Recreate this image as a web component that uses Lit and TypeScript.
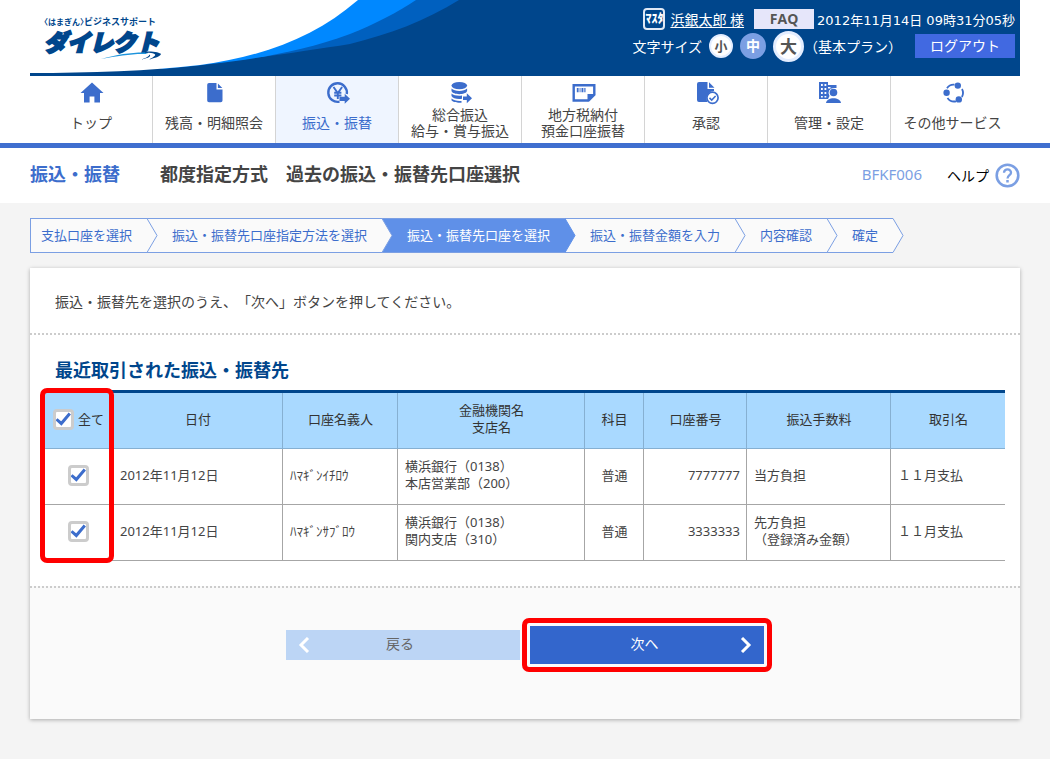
import { LitElement, html, css, svg } from "lit";
import { customElement, state } from "lit/decorators.js";
import { classMap } from "lit/directives/class-map.js";

const icons = {
  home: svg`<path d="M12 1.5 0.5 12H4v9.500h5.600v-6h4.800v6H20V12h3.500z"/>`,
  file: svg`<path d="M6 2h7.500v6.500h6V19.500a1.800 1.800 0 0 1-1.800 1.800H6A1.800 1.800 0 0 1 4.200 19.500V3.800A1.800 1.800 0 0 1 6 2zM14.900 2.400 19.300 7h-4.400z"/>`,
  yen: svg`<path d="M13.500 20.700A9.300 9.300 0 1 1 20.800 13" fill="none" stroke="currentColor" stroke-width="2.400"/><path d="M7.500 6l4.300 6 4.300-6M11.800 12v6M8.200 11.800h7.200M8.200 14.500h7.200" fill="none" stroke="currentColor" stroke-width="1.900"/><path d="M13.500 15.700h5.200v-2.900l5.300 5-5.300 5v-2.900h-5.200z"/>`,
  stack: svg`<ellipse cx="10.300" cy="4.600" rx="7.800" ry="3.700"/><path d="M2.500 7.600c3 3.200 12.600 3.200 15.600 0V10c-1.500 4.200-14.100 4.200-15.600 0zM2.500 12.500c2 2 7 2.600 10.500 2v3.300C8.500 18.500 3.500 17.500 2.500 15zM2.500 17.600c2 2 6 2.600 10 2.300v1.900c-5 .2-9-.8-10-2.500zM14 15.500h3.800v-3.200l5.200 5-5.200 5v-3.200H14z"/>`,
  slip: svg`<path d="M1.700 4.200h20.600v9.500l-5.800 5.800H1.700z" fill="none" stroke="currentColor" stroke-width="2.400"/><path d="M15.500 20.500V13H23.400z"/><path d="M4.800 7h1.800v4.200H4.800zM7.600 7h.9v4.200h-.9zM9.500 7h1.900v4.200H9.500zM12.300 7h1.200v4.200h-1.200z"/>`,
  approve: svg`<path d="M4 1h8.500v7H19v2a7.500 7.500 0 0 0-6.500 11H4a2 2 0 0 1-2-2V3a2 2 0 0 1 2-2zM14 1.300 19.500 6.800H14z"/><circle cx="17.500" cy="16.800" r="5.600" fill="none" stroke="currentColor" stroke-width="1.700"/><path d="m14.500 16.900 2.200 2.200 3.900-4.200" fill="none" stroke="currentColor" stroke-width="1.500"/>`,
  admin: svg`<path d="M1 1h9v3h8.500v3H16a5 5 0 0 0-4.500 8L10 18H1zm2 2v2h1.800V3zm3.500 0v2h1.800V3zM3 7v2h1.800V7zm3.500 0v2h1.800V7zM3 11v2h1.800v-2zm3.500 0v2h1.800v-2zM3 15v1.500h1.800V15zm3.500 0v1.500h1.800V15zM10 6v1.500h2.500V6z" fill-rule="evenodd"/><circle cx="15.500" cy="11.500" r="3.800"/><path d="M8 22c.5-6.500 14.500-6.500 15 0z"/>`,
  other: svg`<path d="M5 7.200A8 8 0 0 1 12.500 3.700M20 8a8.300 8.300 0 0 1-.1 8M14 20.300a8.300 8.300 0 0 1-8.500-3.400" fill="none" stroke="currentColor" stroke-width="1.800"/><circle cx="15.800" cy="4.600" r="3.200"/><circle cx="4.600" cy="11.700" r="3.200"/><circle cx="16.800" cy="18.400" r="3.200"/>`,
};

const navItems = [
  { icon: icons.home, lines: ["トップ"] },
  { icon: icons.file, lines: ["残高・明細照会"] },
  { icon: icons.yen, lines: ["振込・振替"], active: true },
  { icon: icons.stack, lines: ["総合振込", "給与・賞与振込"] },
  { icon: icons.slip, lines: ["地方税納付", "預金口座振替"] },
  { icon: icons.approve, lines: ["承認"] },
  { icon: icons.admin, lines: ["管理・設定"] },
  { icon: icons.other, lines: ["その他サービス"] },
];

const steps = [
  "支払口座を選択",
  "振込・振替先口座指定方法を選択",
  "振込・振替先口座を選択",
  "振込・振替金額を入力",
  "内容確認",
  "確定",
];
const currentStep = 2;

const payees = [
  { date: "2012年11月12日", name: "ﾊﾏｷﾞﾝｲﾁﾛｳ", bank: "横浜銀行（0138）", branch: "本店営業部（200）", type: "普通", no: "7777777", fee: ["当方負担"], label: "１１月支払" },
  { date: "2012年11月12日", name: "ﾊﾏｷﾞﾝｻﾌﾞﾛｳ", bank: "横浜銀行（0138）", branch: "関内支店（310）", type: "普通", no: "3333333", fee: ["先方負担", "（登録済み金額）"], label: "１１月支払" },
];

const base = css`
  *, *::before, *::after { box-sizing: border-box; }
  h1, h2, p, ol, button, input { margin: 0; padding: 0; }
  a { color: inherit; text-decoration: none; }
  button { border: 0; font: inherit; cursor: pointer; }
`;

@customElement("site-header")
class SiteHeader extends LitElement {
  static styles = [base, css`
    :host { display: block; margin: 0 30px; }
    .top { position: relative; display: flex; justify-content: space-between; height: 76px; background: #00468c; color: #fff; overflow: hidden; }
    .wave { position: absolute; left: 0; top: 0; width: 480px; height: 76px; }
    .logo { position: relative; padding: 16px 0 0 14px; color: #00468c; }
    .tagline { display: flex; align-items: center; height: 12px; line-height: 12px; font-weight: 700; font-size: 9px; }
    .brand { font-size: 8px; font-feature-settings: "halt"; }
    .name { display: block; font-size: 23px; line-height: 28px; font-weight: 900; font-style: italic; -webkit-text-stroke: 2px #00468c; }
    .road { position: absolute; left: 70px; top: 48px; width: 62px; height: 14px; }
    .tools { position: relative; padding: 8px 5px 0 0; display: flex; flex-direction: column; align-items: flex-end; }
    .line { display: flex; align-items: center; font-size: 14px; white-space: nowrap; }
    .line.user { height: 22px; }
    .line.size { height: 32px; }
    .master { display: grid; place-items: center; width: 22px; height: 22px; margin-right: 5px; border: 2px solid #dfe8f5; border-radius: 4px; font-size: 12px; line-height: 16px; font-weight: 900; }
    .account { text-decoration: underline; text-underline-offset: 2px; }
    .faq { width: 60px; height: 20px; margin: 0 3px 0 10px; background: #e6e6fa; color: #555; font: 700 14px/20px "Open Sans", sans-serif; text-align: center; }
    .clock { font-family: "DejaVu Sans", "Noto Sans CJK JP", sans-serif; font-size: 13px; }
    .round { display: grid; place-items: center; border-radius: 50%; background: #fff; color: #555; border: 2px solid #e3edff; font-weight: 700; line-height: 1; }
    .s { width: 24px; height: 24px; margin-left: 7px; font-size: 13px; }
    .m { width: 26px; height: 26px; margin-left: 7px; font-size: 14px; background: #7b9fe3; border-color: #7b9fe3; color: #fff; }
    .l { width: 31px; height: 31px; margin-left: 7px; font-size: 17px; border-width: 3px; }
    .logout { width: 100px; height: 24px; margin-left: 13px; background: #4169e1; color: #fff; font-size: 14px; line-height: 24px; }
  `];
  render() {
    return html`
      <header class="top">
        <svg class="wave" viewBox="0 0 480 76" aria-hidden="true">
          <path fill="#0060bf" d="M130 69C200 62 270 52 320 44 360 34 395 21 429 0H300V40z"/>
          <path fill="#0088ff" d="M130 69C205 62 260 56 320 34 345 24 368 12 386 0H300z"/>
          <path fill="#fff" d="M0 73C60 73 120 71 170 65 235 56 285 37 328 0H0z"/>
        </svg>
        <div class="logo">
          <div class="tagline"><span class="brand">〈はまぎん〉</span><span>ビジネスサポート</span></div>
          <span class="name">ダイレクト</span>
          <svg class="road" viewBox="0 0 62 14" aria-hidden="true">
            <path fill="#1d94dc" d="M1 11C18 6 34 4 47 4.500L46 6C32 5.500 18 8 1 11z"/>
            <path fill="#fff" d="M36 14C50 11 52 5 46 3L62 2 58 12z"/>
            <path fill="#00468c" d="M45 3.500C54 3 60 4.500 61 6 60 8.500 55 10 49 11.500 54 9 57 7 54 5.800 52 4.800 48 4.500 45 4.800zM41 11.500C46 10 50 8 49 6.500 52 8 49 10 41 11.500z"/>
          </svg>
        </div>
        <div class="tools">
          <div class="line user">
            <span class="master">ﾏｽﾀ</span><a class="account" href="#">浜銀太郎 様</a>
            <button class="faq">FAQ</button><span class="clock">2012年11月14日 09時31分05秒</span>
          </div>
          <div class="line size">
            <span>文字サイズ</span><button class="round s">小</button><button class="round m">中</button><button class="round l">大</button>
            <span>（基本プラン）</span><button class="logout">ログアウト</button>
          </div>
        </div>
      </header>`;
  }
}

@customElement("main-nav")
class MainNav extends LitElement {
  static styles = [base, css`
    :host { display: block; border-bottom: 5px solid #3f6fcf; background: #fff; }
    .nav { display: grid; grid-template-columns: repeat(8, 1fr); margin: 0 36px 0 30px; height: 67px; }
    .item { display: flex; flex-direction: column; align-items: center; padding-top: 5px; border-right: 1px solid #d4d4d4; font-size: 14px; line-height: 16px; color: #444; }
    .item:last-child { border-right: 0; }
    .icon { width: 24px; height: 24px; margin-left: 2px; fill: currentColor; color: #3c6dcc; }
    .label { flex: 1; display: flex; flex-direction: column; justify-content: center; align-items: center; white-space: nowrap; padding-bottom: 2px; }
    .active { background: #eff5ff; color: #3c6dcc; }
  `];
  render() {
    return html`<nav class="nav">${navItems.map((n) => html`
      <a href="#" class=${classMap({ item: true, active: !!n.active })}>
        <svg class="icon" viewBox="0 0 24 24" aria-hidden="true">${n.icon}</svg>
        <span class="label">${n.lines.map((l) => html`<span>${l}</span>`)}</span>
      </a>`)}</nav>`;
  }
}

@customElement("step-flow")
class StepFlow extends LitElement {
  static styles = [base, css`
    :host { display: block; }
    .steps { display: flex; list-style: none; }
    .step { position: relative; height: 35px; padding: 0 15px 0 25px; border: solid #7b9fe3; border-width: 1px 0; background: #fafafa; color: #3c6dcc; font-size: 13px; line-height: 33px; white-space: nowrap; }
    .step:first-child { padding-left: 10px; border-left-width: 1px; }
    .tip { position: absolute; z-index: 1; left: 100%; top: -1px; width: 11px; height: 35px; fill: #fafafa; stroke: #7b9fe3; }
    .current { background: #5f90e8; color: #fff; }
    .current .tip { fill: #5f90e8; stroke: #5f90e8; }
  `];
  render() {
    return html`<ol class="steps">${steps.map((s, i) => html`
      <li class=${classMap({ step: true, current: i === currentStep })}>${s}
        <svg class="tip" viewBox="0 0 11 35" aria-hidden="true"><path d="M0 .5 10 17.500 0 34.500"/></svg>
      </li>`)}</ol>`;
  }
}

@customElement("payee-table")
class PayeeTable extends LitElement {
  @state() private picked = payees.map(() => true);

  static styles = [base, css`
    :host { display: block; position: relative; }
    .table { width: 100%; table-layout: fixed; border-collapse: separate; border-spacing: 0; border-top: 3px solid #00468c; font-size: 13px; line-height: 17px; color: #444; }
    .w1 { width: 68px; } .w2 { width: 170px; } .w3 { width: 115px; } .w4 { width: 187px; }
    .w5 { width: 59px; } .w6 { width: 103px; } .w7 { width: 144px; }
    .head, .cell { height: 56px; padding: 0 6px 3px 7px; border: solid #a6a6a6; border-width: 0 1px 1px 0; text-align: left; font-weight: 400; vertical-align: middle; }
    .head { background: #a9d9ff; border-color: #86b0d2; color: #333; text-align: center; }
    .head:last-child, .cell:last-child { border-right: 0; }
    .head.pick, .cell.pick { padding: 0 0 2px; text-align: center; }
    .center { text-align: center; }
    .cell.number { text-align: right; }
    .all { display: flex; align-items: center; gap: 4px; padding-left: 8px; white-space: nowrap; }
    .box { appearance: none; flex: none; display: inline-block; vertical-align: middle; width: 21px; height: 21px; border: 3px solid #ccc; border-radius: 4px; background: #fff; }
    .box:checked { background: #fff url("data:image/svg+xml,%3Csvg xmlns='http://www.w3.org/2000/svg' viewBox='0 0 17 17'%3E%3Cpath d='M1.500 8.300 6.300 12.500 14.800 2.500' fill='none' stroke='%233c6dcc' stroke-width='3'/%3E%3C/svg%3E") center / 17px 17px no-repeat border-box; }
    .ring { position: absolute; left: -5px; top: -2px; bottom: -2px; width: 74px; border: 5px solid #f00; border-radius: 7px; pointer-events: none; }
  `];

  private toggleAll(e: Event) {
    const on = (e.target as HTMLInputElement).checked;
    this.picked = this.picked.map(() => on);
  }
  private toggle(i: number) {
    this.picked = this.picked.map((p, k) => (k === i ? !p : p));
  }

  render() {
    return html`
      <table class="table">
        <colgroup><col class="w1"><col class="w2"><col class="w3"><col class="w4"><col class="w5"><col class="w6"><col class="w7"><col></colgroup>
        <thead><tr>
          <th class="head pick"><label class="all"><input class="box" type="checkbox" .checked=${this.picked.every(Boolean)} @change=${this.toggleAll}>全て</label></th>
          <th class="head">日付</th><th class="head">口座名義人</th><th class="head">金融機関名<br>支店名</th>
          <th class="head">科目</th><th class="head">口座番号</th><th class="head">振込手数料</th><th class="head">取引名</th>
        </tr></thead>
        <tbody>${payees.map((p, i) => html`<tr>
          <td class="cell pick"><input class="box" type="checkbox" aria-label=${p.name} .checked=${this.picked[i]} @change=${() => this.toggle(i)}></td>
          <td class="cell">${p.date}</td><td class="cell">${p.name}</td>
          <td class="cell">${p.bank}<br>${p.branch}</td>
          <td class="cell center">${p.type}</td><td class="cell number">${p.no}</td>
          <td class="cell">${p.fee.map((f, k) => html`${k ? html`<br>` : ""}${f}`)}</td>
          <td class="cell">${p.label}</td>
        </tr>`)}</tbody>
      </table>
      <div class="ring"></div>`;
  }
}

@customElement("app-root")
class AppRoot extends LitElement {
  static styles = [base, css`
    :host { display: block; min-height: 100vh; background: #f4f4f4; font-family: "Noto Sans", "Noto Sans CJK JP", sans-serif; text-spacing-trim: space-all; color: #444; }
    .banner { display: flow-root; background: #fff; }
    .title { display: flex; align-items: center; height: 55px; padding: 0 30px; background: #fff; font-size: 18px; line-height: 24px; }
    .category { width: 130px; padding-bottom: 3px; color: #3c6dcc; font-weight: 700; }
    .heading { flex: 1; padding-bottom: 3px; font-size: 18px; }
    .code { padding-bottom: 3px; color: #7b9fe3; font-size: 15px; }
    .help { display: flex; align-items: center; gap: 6px; margin-left: 25px; color: #000; font-size: 14px; }
    .mark { width: 25px; height: 25px; }
    .content { padding: 15px 30px 40px; }
    .card { margin-top: 15px; background: #fff; box-shadow: 0 1px 4px rgba(0, 0, 0, 0.3); }
    .lead { padding: 23px 25px 21px; border-bottom: 2px dotted #ccc; font-size: 14px; line-height: 21px; }
    .list { padding: 22px 15px 25px; }
    .section { padding: 0 10px; margin-bottom: 7px; color: #00468c; font-size: 18px; line-height: 26px; }
    .actions { display: flex; justify-content: center; align-items: center; gap: 10px; padding: 38px 0 55px; border-top: 2px dotted #ccc; background: #fafafa; }
    .slot { position: relative; display: flex; }
    .ring { position: absolute; inset: -8px; border: 5px solid #f00; border-radius: 7px; pointer-events: none; }
    .button { position: relative; width: 234px; font-size: 14px; text-align: center; }
    .back { height: 30px; padding: 0 6px 4px 0; background: #bcd5f5; color: #666; }
    .next { height: 38px; padding: 0 5px 4px 0; background: #3366cc; color: #fff; }
    .chevron { position: absolute; top: 50%; width: 12px; height: 16px; margin-top: -8px; fill: none; stroke: #fff; stroke-width: 3; }
    .back .chevron { left: 12px; }
    .next .chevron { right: 12px; }
  `];
  render() {
    return html`
      <div class="banner"><site-header></site-header></div>
      <main-nav></main-nav>
      <div class="title">
        <span class="category">振込・振替</span>
        <h1 class="heading">都度指定方式　過去の振込・振替先口座選択</h1>
        <span class="code">BFKF006</span>
        <a class="help" href="#">ヘルプ
          <svg class="mark" viewBox="0 0 25 25" fill="none" stroke="#7b9fe3" aria-hidden="true">
            <circle cx="12.500" cy="12.500" r="10.800" stroke-width="2.600"/>
            <path d="M9 9.700C9 5.300 16.200 5.500 16 9.700 15.900 12.200 12.500 12.200 12.500 15.500" stroke-width="2.300"/>
            <path d="M12.500 17v2.500" stroke-width="2.500"/>
          </svg>
        </a>
      </div>
      <main class="content">
        <step-flow></step-flow>
        <div class="card">
          <p class="lead">振込・振替先を選択のうえ、「次へ」ボタンを押してください。</p>
          <section class="list">
            <h2 class="section">最近取引された振込・振替先</h2>
            <payee-table></payee-table>
          </section>
          <div class="actions">
            <button class="button back"><svg class="chevron" viewBox="0 0 12 16" aria-hidden="true"><path d="M10 1 3 8l7 7"/></svg>戻る</button>
            <div class="slot">
              <button class="button next">次へ<svg class="chevron" viewBox="0 0 12 16" aria-hidden="true"><path d="m2 1 7 7-7 7"/></svg></button>
              <div class="ring"></div>
            </div>
          </div>
        </div>
      </main>`;
  }
}
